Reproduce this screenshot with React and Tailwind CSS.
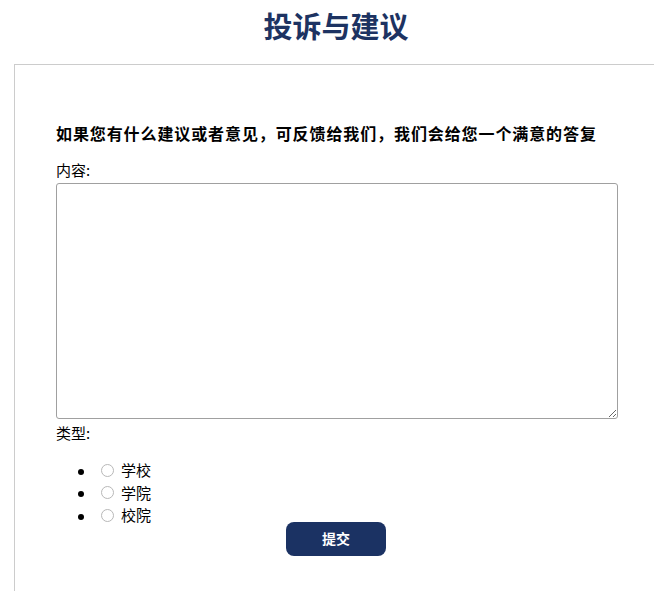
import React from 'react'

const types = ['学校', '学院', '校院']

export default function App() {
  return (
    <div className="w-[654px] h-[591px] overflow-hidden bg-white font-['Noto_Sans_CJK_SC','Noto_Sans',sans-serif] text-black">
      <div className="w-[672px]">
        {/* 标题 */}
        <h1 className="mt-[7px] text-center text-[29px] leading-[36px] font-bold text-[#1d3362]">
          投诉与建议
        </h1>

        {/* 表单卡片 */}
        <div className="mx-[14px] mt-[21px] h-[600px] border border-[#cccccc] px-[41px] pt-[56px]">
          <h3 className="text-[16px] leading-[24px] font-bold tracking-[0.9px]">
            如果您有什么建议或者意见，可反馈给我们，我们会给您一个满意的答复
          </h3>

          <p className="mt-[14px] text-[15px] leading-[22px]">内容:</p>
          <textarea className="mt-[2px] block h-[236px] w-[562px] rounded-[3px] border border-[#a0a0a0] bg-white" />

          <p className="mt-[3px] text-[15px] leading-[22px]">类型:</p>
          <ul className="mt-[15px] list-disc pl-10 text-[15px] leading-[22px]">
            {types.map((t) => (
              <li key={t}>
                <label className="inline-flex items-center">
                  <input
                    type="radio"
                    name="type"
                    className="ml-[5px] mr-[7px] h-[13px] w-[13px] appearance-none rounded-full border border-[#b8b8b8] bg-white"
                  />
                  {t}
                </label>
              </li>
            ))}
          </ul>

          <div className="-mt-[5px] flex justify-center">
            <button className="h-[34px] w-[100px] rounded-[8px] bg-[#1b3263] text-[14px] font-bold text-white">
              提交
            </button>
          </div>
        </div>
      </div>
    </div>
  )
}
